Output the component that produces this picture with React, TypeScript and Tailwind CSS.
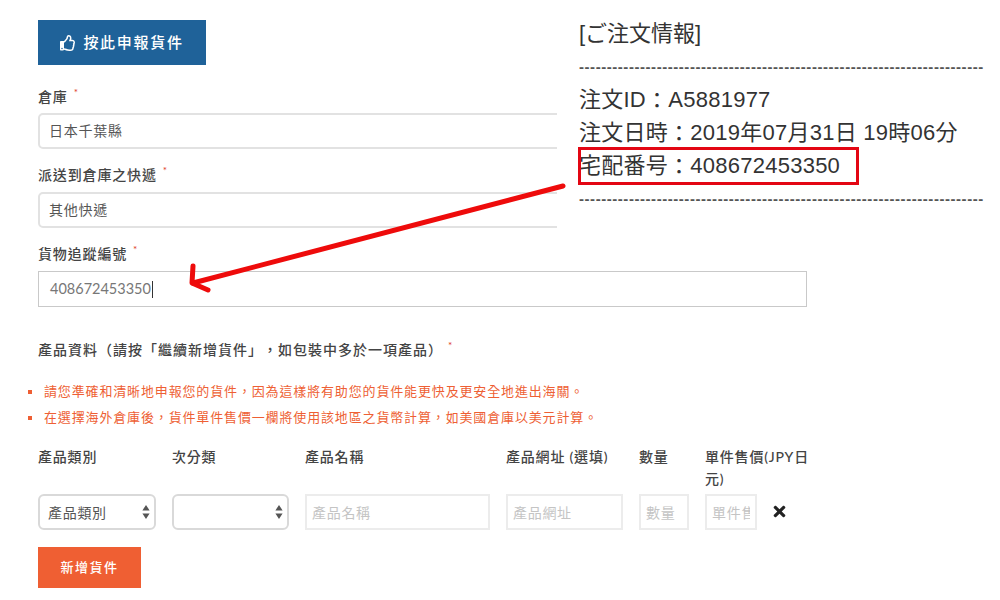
import { FaRegThumbsUp, FaTimes } from 'react-icons/fa';

const sans = 'font-["Lato","Noto_Sans_CJK_TC",sans-serif]';

function Label({ text }: { text: string }) {
  return (
    <label className="flex h-[20px] items-center pb-[2px] text-[14px] font-medium tracking-[0.85px] text-[#444]">
      {text}
      <span className="ml-[6px] -mt-[8px] text-[10px] text-[#e0402a]">*</span>
    </label>
  );
}

function Spinner() {
  return (
    <svg width="8" height="14" viewBox="0 0 8 14" className="shrink-0">
      <path d="M4 0 L7.6 5.4 H0.4 Z M4 14 L7.6 8.6 H0.4 Z" fill="#555" />
    </svg>
  );
}

function SelectBox({ text }: { text?: string }) {
  return (
    <div className="flex h-[36px] w-full items-center justify-between rounded-[6px] border-2 border-[#d9d9d9] bg-white pl-[8px] pr-[4px] text-[14px] tracking-[0.7px] text-[#555]">
      <span>{text}</span>
      <Spinner />
    </div>
  );
}

function Placeholder({ text }: { text: string }) {
  return (
    <input
      readOnly
      placeholder={text}
      className="h-[36px] w-full min-w-0 border-2 border-[#ececec] bg-white px-[5px] text-[14px] tracking-[0.7px] placeholder:text-[#c4c4c4] outline-none"
    />
  );
}

const columns = [
  { w: 'w-[118px]', head: '產品類別', cell: <SelectBox text="產品類別" /> },
  { w: 'w-[117px]', head: '次分類', cell: <SelectBox /> },
  { w: 'w-[185px]', head: '產品名稱', cell: <Placeholder text="產品名稱" /> },
  { w: 'w-[117px]', head: '產品網址 (選填)', cell: <Placeholder text="產品網址" /> },
  { w: 'w-[50px]', head: '數量', cell: <Placeholder text="數量" /> },
  { w: 'w-[52px]', head: '單件售價(JPY日元)', cell: <Placeholder text="單件售價" /> },
];

const dashes = '-'.repeat(73);
const colon = <span className='font-["Noto_Sans_CJK_TC",sans-serif] leading-none -translate-y-[2px]'>：</span>;

export default function App() {
  return (
    <div className={`relative h-[600px] w-[1000px] overflow-hidden bg-white [text-spacing-trim:space-all] ${sans}`}>
      <main className="w-[807px] pl-[38px] pt-[20px]">
        <button className="flex h-[45px] w-[168px] items-center justify-center gap-[7px] bg-[#1f6299] text-[15px] font-medium tracking-[1.7px] text-white" type="button">
          <FaRegThumbsUp className="text-[16px]" />
          按此申報貨件
        </button>

        <div className="mt-[22px]">
          <Label text="倉庫" />
          <div className="mt-[6px] flex h-[36px] items-center rounded-[5px] border-2 border-[#e2e2e2] px-[9px] pb-[1px] text-[14px] tracking-[0.75px] text-[#555]">日本千葉縣</div>
        </div>
        <div className="mt-[16px]">
          <Label text="派送到倉庫之快遞" />
          <div className="mt-[7px] flex h-[36px] items-center rounded-[5px] border-2 border-[#e2e2e2] px-[9px] pb-[1px] text-[14px] tracking-[0.75px] text-[#555]">其他快遞</div>
        </div>
        <div className="mt-[16px]">
          <Label text="貨物追蹤編號" />
          <div className="mt-[7px] flex h-[36px] items-center border border-[#c9c9c9] px-[11px] text-[14.5px] text-[#777]">
            408672453350
            <span className="ml-[1px] h-[17px] w-px bg-[#333]" />
          </div>
        </div>

        <div className="mt-[32px] flex h-[20px] items-center text-[14px] font-medium tracking-[1px] text-[#444]">
          產品資料（請按「繼續新增貨件」，如包裝中多於一項產品）
          <span className="ml-[5px] -mt-[8px] text-[10px] text-[#e0402a]">*</span>
        </div>

        <ul className="-ml-[10px] mt-[24px] flex w-[700px] flex-col gap-[8px] text-[13px] tracking-[0.85px] text-[#ee5f34]">
          <li className="flex h-[18px] items-center gap-[12px]">
            <span className="h-[4px] w-[4px] bg-[#ee5f34]" />
            請您準確和清晰地申報您的貨件，因為這樣將有助您的貨件能更快及更安全地進出海關。
          </li>
          <li className="flex h-[18px] items-center gap-[12px]">
            <span className="h-[4px] w-[4px] bg-[#ee5f34]" />
            在選擇海外倉庫後，貨件單件售價一欄將使用該地區之貨幣計算，如美國倉庫以美元計算。
          </li>
        </ul>

        <div className="mt-[19px] flex gap-4">
          {columns.map((col) => (
            <div key={col.head} className={col.w}>
              <div className="h-[48px] text-[14px] font-medium leading-[22px] tracking-[0.8px] text-[#444] [word-break:break-all]">
                <span className={col.head.startsWith('單件') ? 'block w-[106px]' : 'block whitespace-nowrap'}>{col.head}</span>
              </div>
              {col.cell}
            </div>
          ))}
          <div className="-ml-[2px] flex h-[84px] items-end pb-[10px] text-[17px] text-[#222]">
            <FaTimes />
          </div>
        </div>

        <button className="mt-[17px] h-[41px] w-[103px] bg-[#ef5f33] text-[13px] font-medium tracking-[1.5px] text-white" type="button">
          新增貨件
        </button>
      </main>

      {/* pasted order mail, sits over the form */}
      <aside className='absolute left-[557px] top-0 h-[228px] w-[443px] overflow-hidden bg-white pl-[22px] pt-[19px] font-["Liberation_Sans","Noto_Sans_CJK_JP",sans-serif] text-[22px] leading-[33px] text-[#333]'>
        <div className="h-[29px] leading-[29px]">[ご注文情報]</div>
        <div className="mt-[2px] h-[33px] overflow-hidden whitespace-nowrap text-[15px] font-bold tracking-[0.55px] text-[#555]">{dashes}</div>
        <div className="flex h-[33px] items-center tracking-[0.25px]">注文ID{colon}A5881977</div>
        <div className="flex h-[33px] items-center tracking-[0.25px]">注文日時{colon}2019年07月31日 19時06分</div>
        <div className="flex h-[33px] items-center tracking-[0.25px]">宅配番号{colon}408672453350</div>
        <div className="h-[33px] overflow-hidden whitespace-nowrap text-[15px] font-bold tracking-[0.55px] text-[#555]">{dashes}</div>
        <div className="absolute left-[21px] top-[147px] h-[38px] w-[281px] border-[3px] border-[#e30613]" />
      </aside>

      <svg className="absolute left-0 top-0" width="1000" height="600" viewBox="0 0 1000 600" fill="none">
        <path d="M563 186 L193 283" stroke="#ee0b0b" strokeWidth="5" strokeLinecap="round" />
        <path d="M193 266 L192 283 L208 290" stroke="#ee0b0b" strokeWidth="5" strokeLinecap="round" strokeLinejoin="round" />
      </svg>
    </div>
  );
}
